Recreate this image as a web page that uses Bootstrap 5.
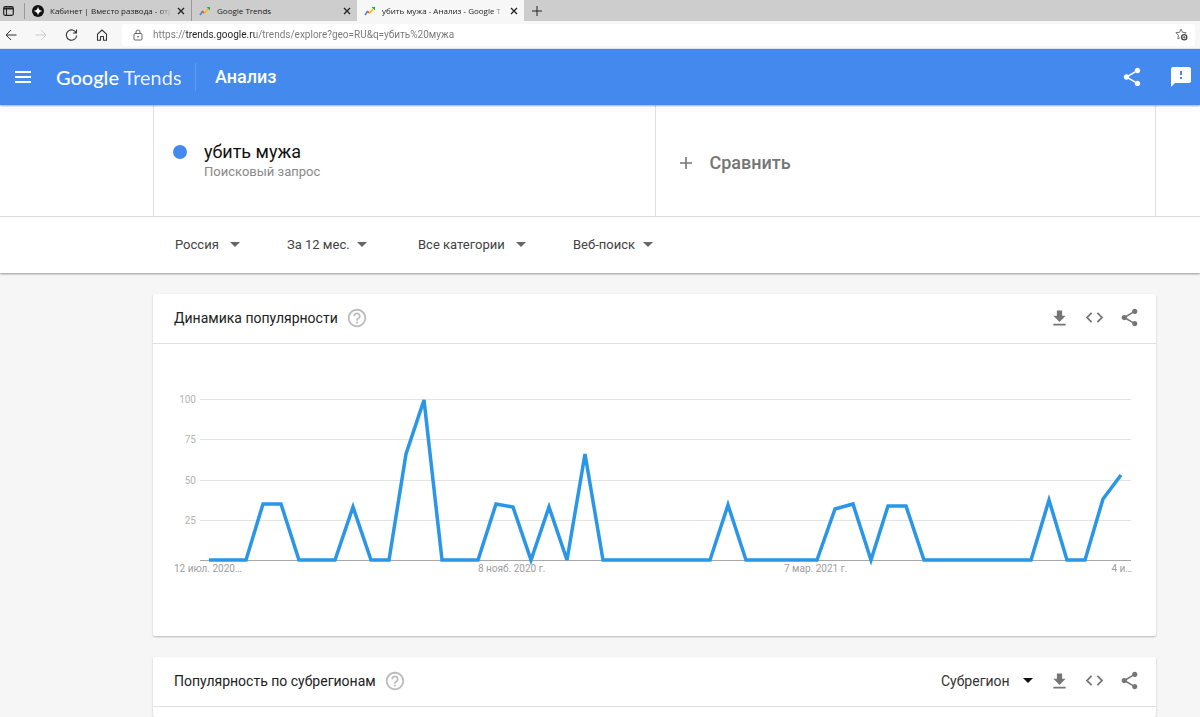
<!DOCTYPE html>
<html lang="ru">
<head>
<meta charset="utf-8">
<meta name="viewport" content="width=device-width, initial-scale=1">
<title>убить мужа - Анализ - Google Trends</title>
<link href="https://cdn.jsdelivr.net/npm/bootstrap@5.3.0/dist/css/bootstrap.min.css" rel="stylesheet">
<style>
  body { font-family: Roboto, "Liberation Sans", sans-serif; background: #f6f6f6; color: #212121; font-size: 14px; line-height: 20px; }
  svg { display: block; flex: none; }
  button.plain { background: none; border: 0; padding: 0; color: inherit; }

  /* browser frame */
  .tabstrip { font-family: "Open Sans", "Noto Sans", sans-serif; background: #cdcdcd; height: 21px; font-size: 8px; line-height: 20px; color: #222; }
  .tabstrip a { color: inherit; text-decoration: none; }
  .pin { width: 25px; padding-left: 3px; border-right: 1px solid #999; height: 16px; }
  .tab-item { width: 166px; padding: 0 6px 0 7px; height: 21px; gap: 6px; }
  .tab-item + .tab-item { border-left: 1px solid #999; }
  .tab-item.current { width: 167px; background: #f7f7f7; border-left: 0; }
  .tab-title { overflow: hidden; white-space: nowrap; }
  .fade-end { -webkit-mask-image: linear-gradient(to left, transparent, #000 12px); mask-image: linear-gradient(to left, transparent, #000 12px); }
  .toolbar { background: #f7f7f7; height: 28px; border-bottom: 1px solid #e4e9f2; color: #333; }
  .nav-icons { width: 122px; padding-left: 5px; gap: 18px; }
  .address { background: #fff; height: 22px; border-radius: 3px; padding: 0 7px 0 11px; margin-right: 5px; gap: 10px; }
  .address input { border: 0; outline: 0; padding: 0; height: 20px; font-size: 10px; line-height: 20px; color: #767676;
    background: linear-gradient(to right, #767676 32px, #222 32px, #222 102px, #767676 102px) text;
    -webkit-background-clip: text; background-clip: text; -webkit-text-fill-color: transparent; }

  /* application bar */
  .appbar { background: #4489ee; height: 56px; color: #fff; padding: 0 9px 0 15px; box-shadow: 0 1px 2px rgba(0,0,0,.35); position: relative; }
  .logo { font-family: Lato, sans-serif; font-size: 20px; line-height: 28px; color: #fff; text-decoration: none; margin-left: 25px; width: 140px; border-right: 1px solid #5f9bf1; }
  .logo-main { font-weight: 500; }
  .logo-sub { font-weight: 400; opacity: .9; }
  .page-title { font-size: 18px; line-height: 24px; font-weight: 500; margin: 0 0 0 19px; }

  /* shared page column */
  .column-pad { padding-left: 153px; padding-right: 44px; }
  .terms { background: #fff; border-bottom: 1px solid #e0e0e0; }
  .term-cell { height: 111px; border-left: 1px solid #e0e0e0; }
  .term-cell:last-child { border-right: 1px solid #e0e0e0; }
  .dot { width: 14px; height: 14px; border-radius: 50%; background: #4489ee; margin: 4px 17px 0 19px; }
  .term { font-size: 18px; line-height: 22px; color: #111; }
  .kind { font-size: 13px; line-height: 18px; color: #8a8a8a; }
  button.compare { font-size: 18px; font-weight: 500; color: #757575; gap: 17px; margin-left: 23px; padding-top: 5px; }
  .filters { background: #fff; height: 56px; box-shadow: 0 1px 2px rgba(0,0,0,.4); gap: 47px; }
  .filters.column-pad { padding-left: 175px; }
  .pick { appearance: none; -webkit-appearance: none; border: 0; border-radius: 0; padding: 0 17px 0 0; font-size: 13px; line-height: 20px; color: #424242;
    background: url("data:image/svg+xml,%3Csvg xmlns='http://www.w3.org/2000/svg' width='10' height='5'%3E%3Cpath d='M0 0h10L5 5z' fill='%23666'/%3E%3C/svg%3E") no-repeat right 7px; }
  .pick-wide { padding-right: 21px; }
  .pick-dark { padding-right: 23px; font-size: 14px; color: #333; background-image: url("data:image/svg+xml,%3Csvg xmlns='http://www.w3.org/2000/svg' width='10' height='5'%3E%3Cpath d='M0 0h10L5 5z' fill='%23111'/%3E%3C/svg%3E"); margin-right: 16px; }

  /* widgets */
  .widget-list { padding-top: 21px; }
  .widget { background: #fff; border-radius: 2px; box-shadow: 0 1px 2px rgba(0,0,0,.25); margin-bottom: 21px; }
  .widget-head { height: 50px; border-bottom: 1px solid #e0e0e0; padding: 0 16px 2px 21px; }
  .widget-head h2 { font-size: 14px; line-height: 20px; font-weight: 400; margin: 0 8px 0 0; color: #212121; }
  .tools { color: #757575; gap: 14px; }
  .chart-pad { padding: 46px 24px 56px 21px; }
  .chart-pad svg { width: 100%; height: auto; }
  .chart-pad text { font-size: 10px; fill: #9e9e9e; }
  .chart-pad .scale text { fill: #b4b4b4; }
</style>
</head>
<body class="d-flex flex-column min-vh-100">
<svg class="d-none" xmlns="http://www.w3.org/2000/svg">
  <symbol id="share" viewBox="0 0 24 24"><path fill="currentColor" d="M18 16.08c-.76 0-1.44.3-1.96.77L8.91 12.7c.05-.23.09-.46.09-.7s-.04-.47-.09-.7l7.05-4.11c.54.5 1.25.81 2.04.81 1.66 0 3-1.34 3-3s-1.34-3-3-3-3 1.34-3 3c0 .24.04.47.09.7L8.04 9.81C7.5 9.31 6.79 9 6 9c-1.66 0-3 1.34-3 3s1.34 3 3 3c.79 0 1.5-.31 2.04-.81l7.12 4.16c-.05.21-.08.43-.08.65 0 1.61 1.31 2.92 2.92 2.92s2.92-1.31 2.92-2.92-1.31-2.92-2.92-2.92z"/></symbol>
  <symbol id="download" viewBox="0 0 24 24"><path fill="currentColor" d="M19 10h-4V4H9v6H5l7 7 7-7zM5 19v2h14v-2H5z"/></symbol>
  <symbol id="embed" viewBox="0 0 24 24"><path fill="currentColor" d="M9.4 16.6L4.8 12l4.6-4.6L8 6l-6 6 6 6 1.4-1.4zm5.2 0l4.6-4.6-4.6-4.6L16 6l6 6-6 6-1.4-1.4z"/></symbol>
  <symbol id="help" viewBox="0 0 24 24"><path fill="currentColor" d="M11 18h2v-2h-2v2zm1-16C6.48 2 2 6.48 2 12s4.48 10 10 10 10-4.48 10-10S17.52 2 12 2zm0 18c-4.41 0-8-3.59-8-8s3.59-8 8-8 8 3.59 8 8-3.59 8-8 8zm0-14c-2.21 0-4 1.79-4 4h2c0-1.1.9-2 2-2s2 .9 2 2c0 2-3 1.75-3 5h2c0-2.25 3-2.5 3-5 0-2.21-1.79-4-4-4z"/></symbol>
  <symbol id="close" viewBox="0 0 8 8"><path d="M1 1l6 6M7 1L1 7" stroke="currentColor" stroke-width="1.3" fill="none"/></symbol>
  <symbol id="trend" viewBox="0 0 12 10"><path d="M1 9l2.500-3.500" stroke="#4285f4" stroke-width="1.600"/><path d="M3 5l2.500 2" stroke="#ea4335" stroke-width="1.600"/><path d="M5.300 7.500L9 3" stroke="#fbbc04" stroke-width="1.600"/><path d="M7.500 1H11v3.500z" fill="#34a853"/></symbol>
</svg>

<nav class="tabstrip d-flex align-items-center" aria-label="Вкладки">
  <div class="pin d-flex align-items-center">
    <button class="plain" aria-label="Меню вкладок"><svg width="11" height="10" viewBox="0 0 11 10"><rect x=".7" y=".7" width="9.600" height="8.600" rx="1.500" fill="none" stroke="#222" stroke-width="1.200"/><path d="M1 2.500h9" stroke="#222" stroke-width="2"/><path d="M3.500 3v6" stroke="#222"/></svg></button>
  </div>
  <div class="tab-item d-flex align-items-center">
    <svg width="12" height="12" viewBox="0 0 12 12"><circle cx="6" cy="6" r="6" fill="#111"/><path d="M6 1.500Q6.500 5.500 10.500 6Q6.500 6.500 6 10.500Q5.500 6.500 1.500 6Q5.500 5.500 6 1.500" fill="#fff"/></svg>
    <a href="#" class="tab-title fade-end flex-grow-1">Кабинет | Вместо развода - отр</a>
    <button class="plain" aria-label="Закрыть"><svg width="8" height="8"><use href="#close"/></svg></button>
  </div>
  <div class="tab-item d-flex align-items-center">
    <svg width="12" height="10"><use href="#trend"/></svg>
    <a href="#" class="tab-title flex-grow-1">Google Trends</a>
    <button class="plain" aria-label="Закрыть"><svg width="8" height="8"><use href="#close"/></svg></button>
  </div>
  <div class="tab-item current d-flex align-items-center">
    <svg width="12" height="10"><use href="#trend"/></svg>
    <a href="#" class="tab-title fade-end flex-grow-1">убить мужа - Анализ - Google T</a>
    <button class="plain" aria-label="Закрыть"><svg width="8" height="8"><use href="#close"/></svg></button>
  </div>
  <button class="plain ms-2" aria-label="Новая вкладка"><svg width="10" height="10" viewBox="0 0 10 10"><path d="M5 0v10M0 5h10" stroke="#222"/></svg></button>
</nav>
<div class="toolbar d-flex align-items-center">
  <div class="nav-icons d-flex align-items-center">
    <button class="plain" aria-label="Назад"><svg width="12" height="12" viewBox="0 0 12 12" fill="none" stroke="#333"><path d="M11.500 6H1M6 1L1 6l5 5"/></svg></button>
    <button class="plain" aria-label="Вперёд" disabled><svg width="12" height="12" viewBox="0 0 12 12" fill="none" stroke="#ccc"><path d="M.5 6H11M6 1l5 5-5 5"/></svg></button>
    <button class="plain" aria-label="Обновить"><svg width="13" height="12" viewBox="0 0 12 12" fill="none" stroke="#333" stroke-width="1.100"><path d="M10.800 4A5.200 5.200 0 1 0 11.200 6.500M11 .5V4H7.500"/></svg></button>
    <button class="plain" aria-label="Домой"><svg width="12" height="12" viewBox="0 0 12 12" fill="none" stroke="#333" stroke-width="1.100"><path d="M1.500 5.200L6 1l4.500 4.200v6H7.500V7.500h-3v3.700h-3z" stroke-linejoin="round"/></svg></button>
  </div>
  <div class="address d-flex align-items-center flex-grow-1">
    <svg width="10" height="12" viewBox="0 0 10 12" fill="none" stroke="#666"><rect x="1" y="4.500" width="8" height="6.500" rx="1"/><path d="M3 4.500V3a2 2 0 0 1 4 0v1.500"/><circle cx="5" cy="7.700" r=".5" fill="#666"/></svg>
    <input class="flex-grow-1" type="text" aria-label="Адрес" value="https://trends.google.ru/trends/explore?geo=RU&amp;q=убить%20мужа">
    <button class="plain" aria-label="В избранное"><svg width="13" height="13" viewBox="0 0 13 13"><path d="M8.600 4.500L7.500 4.200 6 1 4.500 4.300.8 4.700l2.700 2.500L2.800 11l2.400-1.400M7.500 4.300l3.600.4-1 1" fill="none" stroke="#777"/><circle cx="9.200" cy="9.300" r="2.600" fill="#fff" stroke="#444" stroke-width="1.300"/><path d="M9.200 8v2.600M7.900 9.300h2.600" stroke="#444" stroke-width=".8"/></svg></button>
  </div>
</div>

<header class="appbar d-flex align-items-center">
  <button class="plain" aria-label="Меню"><svg width="16" height="12" viewBox="0 0 16 12"><path d="M0 1h16M0 6h16M0 11h16" stroke="#fff" stroke-width="2"/></svg></button>
  <a class="logo text-nowrap" href="#"><span class="logo-main">Google</span> <span class="logo-sub">Trends</span></a>
  <h1 class="page-title">Анализ</h1>
  <button class="plain ms-auto" aria-label="Поделиться"><svg width="22" height="22"><use href="#share"/></svg></button>
  <button class="plain ms-4 ps-1" aria-label="Отправить отзыв"><svg width="20" height="20" viewBox="2 2 20 20"><path fill="#fff" d="M20 2H4c-1.100 0-2 .9-2 2v18l4-4h14c1.100 0 2-.9 2-2V4c0-1.100-.9-2-2-2zm-7 12h-2v-2h2v2zm0-4h-2V6h2v4z"/></svg></button>
</header>

<section class="terms column-pad">
  <div class="row g-0">
    <div class="col-6 term-cell d-flex align-items-center">
      <div class="d-flex align-items-start">
        <span class="dot"></span>
        <div><div class="term">убить мужа</div><div class="kind">Поисковый запрос</div></div>
      </div>
    </div>
    <div class="col-6 term-cell d-flex align-items-center">
      <button class="plain compare d-flex align-items-center"><svg width="14" height="14" viewBox="0 0 14 14"><path d="M7 1v12M1 7h12" stroke="#757575" stroke-width="1.600"/></svg>Сравнить</button>
    </div>
  </div>
</section>

<section class="filters column-pad d-flex align-items-center">
  <select class="pick pick-wide" aria-label="Регион"><option>Россия</option></select>
  <select class="pick me-1" aria-label="Период"><option>За 12 мес.</option></select>
  <select class="pick pick-wide" aria-label="Категория"><option>Все категории</option></select>
  <select class="pick" aria-label="Тип поиска"><option>Веб-поиск</option></select>
</section>

<main class="widget-list column-pad flex-grow-1 d-flex flex-column">
  <section class="widget">
    <div class="widget-head d-flex align-items-center">
      <h2>Динамика популярности</h2>
      <svg width="22" height="22" color="#bdbdbd"><use href="#help"/></svg>
      <div class="tools d-flex align-items-center ms-auto">
        <button class="plain" aria-label="Скачать"><svg width="21" height="21"><use href="#download"/></svg></button>
        <button class="plain" aria-label="Код для вставки"><svg width="21" height="21"><use href="#embed"/></svg></button>
        <button class="plain" aria-label="Поделиться"><svg width="21" height="21"><use href="#share"/></svg></button>
      </div>
    </div>
    <div class="chart-pad">
      <svg viewBox="0 0 958 190" role="img" aria-label="График популярности">
        <path d="M26 9.500H957M26 49.500H957M26 90.500H957M26 130.500H957" stroke="#e3e3e3"/>
        <path d="M26 170.500H957" stroke="#a8a8a8"/>
        <g class="scale" text-anchor="end"><text x="22" y="13">100</text><text x="22" y="53">75</text><text x="22" y="94">50</text><text x="22" y="134">25</text></g>
        <text x="0" y="182">12 июл. 2020…</text>
        <text x="304" y="182">8 нояб. 2020 г.</text>
        <text x="610" y="182">7 мар. 2021 г.</text>
        <text x="958" y="182" text-anchor="end">4 и…</text>
        <polyline fill="none" stroke="#2a96e8" stroke-width="3.500" points="35,170 72,170 89,114 107,114 125,170 161,170 179,117 197,170 215,170 232,64 250,10 268,170 304,170 322,114 339,117 357,170 375,117 393,170 411,64 429,170 536,170 554,115 572,170 643,170 661,119 679,114 697,170 714,116 732,116 750,170 857,170 875,110 893,170 911,170 929,109 947,85"/>
      </svg>
    </div>
  </section>
  <section class="widget flex-grow-1 mb-0">
    <div class="widget-head d-flex align-items-center">
      <h2>Популярность по субрегионам</h2>
      <svg width="22" height="22" color="#bdbdbd"><use href="#help"/></svg>
      <select class="pick pick-dark ms-auto" aria-label="Детализация"><option>Субрегион</option></select>
      <div class="tools d-flex align-items-center">
        <button class="plain" aria-label="Скачать"><svg width="21" height="21"><use href="#download"/></svg></button>
        <button class="plain" aria-label="Код для вставки"><svg width="21" height="21"><use href="#embed"/></svg></button>
        <button class="plain" aria-label="Поделиться"><svg width="21" height="21"><use href="#share"/></svg></button>
      </div>
    </div>
  </section>
</main>
<script src="https://cdn.jsdelivr.net/npm/bootstrap@5.3.0/dist/js/bootstrap.bundle.min.js"></script>
</body>
</html>
